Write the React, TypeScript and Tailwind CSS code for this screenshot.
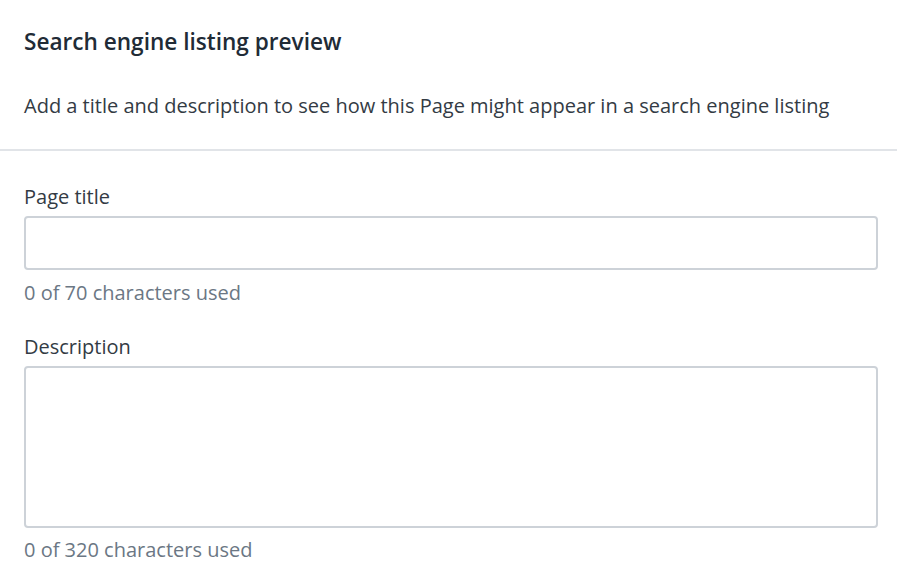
export default function App() {
  const font = { fontFamily: '"Open Sans", "Noto Sans", Arial, sans-serif' };
  return (
    <div className="min-h-screen w-full bg-white text-[#212b36]" style={font}>
      {/* Header */}
      <div className="px-6 pt-7 pb-[29px]">
        <h2 className="text-[22.6px] leading-[28px] font-semibold">Search engine listing preview</h2>
        <p className="mt-9 text-[20px] leading-[28px] text-[#333b44]">
          Add a title and description to see how this Page might appear in a search engine listing
        </p>
      </div>
      <div className="h-[2px] bg-[#e1e4e8]" />

      {/* Fields */}
      <div className="px-6 pt-8 pr-[19px]">
        <label className="block text-[20px] leading-[28px] text-[#333b44]">Page title</label>
        <input
          type="text"
          className="mt-[5px] block h-[54px] w-full rounded-[4px] border-2 border-[#cdd2d8] bg-white px-3 outline-none"
        />
        <div className="mt-[9px] text-[20px] leading-[28px] text-[#6b7784]">0 of 70 characters used</div>

        <label className="mt-[26px] block text-[20px] leading-[28px] text-[#333b44]">Description</label>
        <textarea className="mt-[5px] block h-[162px] w-full resize-none rounded-[4px] border-2 border-[#cdd2d8] bg-white px-3 py-2 outline-none" />
        <div className="mt-2 text-[20px] leading-[28px] text-[#6b7784]">0 of 320 characters used</div>
      </div>
    </div>
  );
}
